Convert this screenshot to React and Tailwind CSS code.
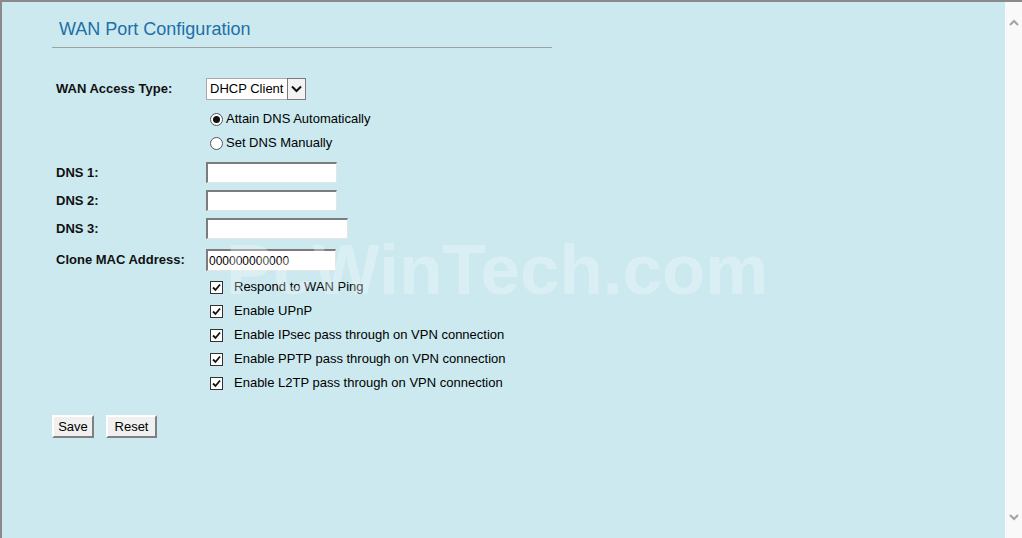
import React from 'react';

const font = { fontFamily: '"Liberation Sans", Arial, sans-serif' };

const Check = () => (
  <span className="w-[13px] h-[13px] border border-[#333] bg-white flex items-center justify-center shrink-0">
    <svg width="9" height="9" viewBox="0 0 9 9">
      <path d="M1 4.5 L3.5 7 L8 1.5" fill="none" stroke="#111" strokeWidth="1.8" />
    </svg>
  </span>
);

const Radio = ({ on }) => (
  <span className="w-[13px] h-[13px] rounded-full border border-[#555] bg-white flex items-center justify-center shrink-0">
    {on && <span className="w-[7px] h-[7px] rounded-full bg-[#111]" />}
  </span>
);

const TextBox = ({ w = 'w-[131px]', h = 'h-[21px]', value }) => (
  <div className={`${w} ${h} bg-white border-t-2 border-l-2 border-b border-r border-t-[#7c7c7c] border-l-[#7c7c7c] border-b-[#e4e4e4] border-r-[#e4e4e4] text-[12px] leading-none flex items-center px-[1px] text-black`}>
    {value}
  </div>
);

const Label = ({ children }) => (
  <div className="w-[154px] pl-1 text-[13px] font-bold text-[#111]">{children}</div>
);

const Btn = ({ children, w }) => (
  <button className={`${w} h-[23px] bg-[#f0f0f0] border-2 border-t-white border-l-white border-b-[#808080] border-r-[#808080] text-[13px] text-black leading-none`}>
    {children}
  </button>
);

const checks = [
  'Respond to WAN Ping',
  'Enable UPnP',
  'Enable IPsec pass through on VPN connection',
  'Enable PPTP pass through on VPN connection',
  'Enable L2TP pass through on VPN connection',
];

export default function App() {
  return (
    <div style={font} className="w-[1022px] h-[538px] flex border-t-2 border-[#8a8a8a] overflow-hidden relative">
      <div className="flex-1 bg-[#cbe9ef] border-l-2 border-[#8a8a8a] pl-[50px]">
        <div className="w-[500px] mt-[15px] pb-[6px] border-b border-[#a0a0a0]">
          <h1 className="pl-[7px] text-[18px] leading-[24px] text-[#1f6fa8]">WAN Port Configuration</h1>
        </div>

        <div className="mt-[30px] flex items-center h-[22px]">
          <Label>WAN Access Type:</Label>
          <div className="flex h-[22px]">
            <div className="w-[81px] bg-white border border-[#a9a9a9] border-r-0 text-[13px] flex items-center pl-[3px] text-black">DHCP Client</div>
            <div className="w-[19px] bg-[#f3f3f3] border border-[#7a7a7a] flex items-center justify-center">
              <svg width="11" height="8" viewBox="0 0 11 8">
                <path d="M1 1.5 L5.5 6 L10 1.5" fill="none" stroke="#111" strokeWidth="2" />
              </svg>
            </div>
          </div>
        </div>

        <div className="mt-[7px] pl-[158px] text-[13px] text-black">
          <div className="h-[24px] flex items-center gap-[3px]"><Radio on /> Attain DNS Automatically</div>
          <div className="h-[24px] flex items-center gap-[3px]"><Radio /> Set DNS Manually</div>
        </div>

        <div className="mt-[7px] flex flex-col gap-[7px]">
          <div className="flex items-center"><Label>DNS 1:</Label><TextBox /></div>
          <div className="flex items-center"><Label>DNS 2:</Label><TextBox /></div>
          <div className="flex items-center"><Label>DNS 3:</Label><TextBox w="w-[142px]" /></div>
        </div>

        <div className="mt-[10px] flex items-center">
          <Label>Clone MAC Address:</Label>
          <TextBox w="w-[130px]" h="h-[22px]" value="000000000000" />
        </div>

        <div className="mt-[4px] pl-[158px] text-[13px] text-black">
          {checks.map((c) => (
            <div key={c} className="h-[24px] flex items-center gap-[11px]">
              <Check />
              <span>{c}</span>
            </div>
          ))}
        </div>

        <div className="mt-[20px] flex gap-[12px]">
          <Btn w="w-[42px]">Save</Btn>
          <Btn w="w-[51px]">Reset</Btn>
        </div>
      </div>

      <div className="w-[17px] bg-[#f9f9f9] flex flex-col items-center justify-between py-[17px]">
        <svg width="10" height="7" viewBox="0 0 10 7">
          <path d="M1 6 L5 2 L9 6" fill="none" stroke="#a3a3a3" strokeWidth="2" />
        </svg>
        <svg width="10" height="7" viewBox="0 0 10 7">
          <path d="M1 1 L5 5 L9 1" fill="none" stroke="#a3a3a3" strokeWidth="2" />
        </svg>
      </div>

      <div className="absolute left-[226px] top-[233px] text-[71px] leading-[70px] font-bold text-white/30 pointer-events-none select-none">
        PcWinTech.com
      </div>
    </div>
  );
}
